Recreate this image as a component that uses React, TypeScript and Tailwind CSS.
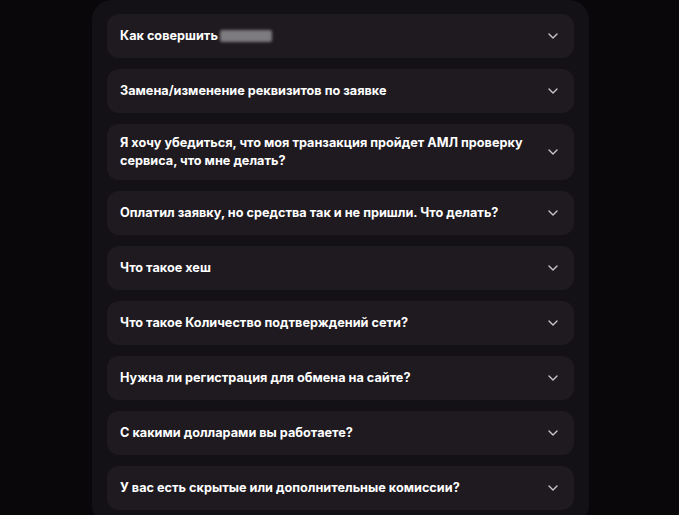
import { ChevronDown } from 'lucide-react';

const questions: { title: string; blurred?: boolean }[] = [
  { title: 'Как совершить', blurred: true },
  { title: 'Замена/изменение реквизитов по заявке' },
  { title: 'Я хочу убедиться, что моя транзакция пройдет АМЛ проверку сервиса, что мне делать?' },
  { title: 'Оплатил заявку, но средства так и не пришли. Что делать?' },
  { title: 'Что такое хеш' },
  { title: 'Что такое Количество подтверждений сети?' },
  { title: 'Нужна ли регистрация для обмена на сайте?' },
  { title: 'С какими долларами вы работаете?' },
  { title: 'У вас есть скрытые или дополнительные комиссии?' },
];

const FaqItem = ({ title, blurred }: { title: string; blurred?: boolean }) => (
  <div className='flex items-center justify-between rounded-xl bg-[#1e1a20] pl-[13px] pr-[13px] py-[10px] min-h-[44px]'>
    <span className='flex items-center text-[12.7px] font-bold leading-[18px] text-white pr-4'>
      {title}
      {blurred && (
        <span className='ml-[2px] inline-block h-[12px] w-[52px] rounded-[2px] bg-[#7d7a80] blur-[1.5px]'></span>
      )}
    </span>
    <ChevronDown size={16} strokeWidth={2} className='shrink-0 text-[#c9c6cc]' />
  </div>
);

export default function App() {
  return (
    <div className='min-h-[515px] w-full bg-[#09070a] overflow-hidden' style={{ fontFamily: 'Inter, "Noto Sans", sans-serif' }}>
      <div className='ml-[92px] w-[497px] rounded-[20px] bg-[#141116] px-[15px] pt-[14px] pb-[15px] flex flex-col gap-[11px]'>
        {questions.map((q) => (
          <FaqItem key={q.title} title={q.title} blurred={q.blurred} />
        ))}
      </div>
    </div>
  );
}
